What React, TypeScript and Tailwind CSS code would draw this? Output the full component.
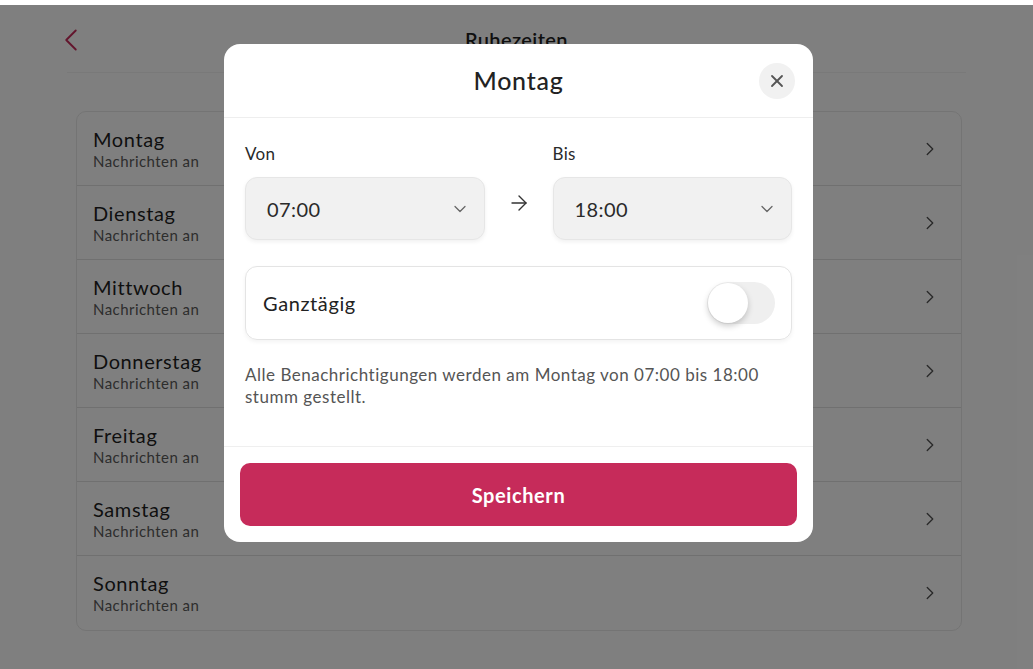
import React, { useState } from 'react';
import { ChevronLeft, ChevronRight, ChevronDown, ArrowRight, X } from 'lucide-react';

const days = ['Montag', 'Dienstag', 'Mittwoch', 'Donnerstag', 'Freitag', 'Samstag', 'Sonntag'];

function TimeSelect({ label, value }: { label: string; value: string }) {
	return (
		<div className="flex-1">
			<div className="text-[17px] tracking-[0.02em] text-[#2a2a2a] mb-[11px] leading-[24px]">{label}</div>
			<div className="h-[63px] rounded-[12px] bg-[#f1f1f1] border border-[#e6e6e6] shadow-[0_2px_4px_rgba(0,0,0,0.06)] flex items-center justify-between pl-[21px] pr-[14px]">
				<span className="text-[20px] tracking-[0.02em] text-[#2a2a2a]">{value}</span>
				<ChevronDown className="w-[20px] h-[20px] text-[#666]" strokeWidth={1.5} />
			</div>
		</div>
	);
}

export default function App() {
	const [allDay, setAllDay] = useState(false);

	return (
		<div className="relative h-[669px] w-full bg-white overflow-hidden font-['Lato',sans-serif]">
			{/* Page behind the dialog */}
			<div className="h-[73px] mx-[67px] border-b border-[#f3f3f3] flex items-center relative">
				<ChevronLeft className="w-[38px] h-[38px] -ml-[15px] mt-[7px] text-[#c62b5a]" strokeWidth={1.2} />
				<div className="absolute left-0 right-0 top-[24px] text-center text-[20px] font-semibold tracking-[0.02em] text-[#1f1f1f]">Ruhezeiten</div>
			</div>

			<div className="ml-[76px] mr-[71px] mt-[38px] border border-[#e8e8e8] rounded-[10px] overflow-hidden">
				{days.map((day, i) => (
					<div
						key={day}
						className={`h-[74px] flex items-center justify-between pl-[16px] pr-[20px] ${i < days.length - 1 ? 'border-b border-[#e0e0e0]' : ''}`}
					>
						<div>
							<div className="text-[20px] tracking-[0.03em] text-[#1f1f1f] leading-[25px]">{day}</div>
							<div className="text-[15px] tracking-[0.03em] text-[#5a5a5a] leading-[19px]">Nachrichten an</div>
						</div>
						<ChevronRight className="w-[22px] h-[22px] text-[#555]" strokeWidth={1.5} />
					</div>
				))}
			</div>

			{/* Overlay */}
			<div className="absolute left-0 right-0 bottom-0 top-[5px] bg-black/50 flex justify-center pt-[39px] pl-[4px]">
				<div className="w-[589px] h-[498px] bg-white rounded-[16px] flex flex-col overflow-hidden">
					<div className="h-[74px] border-b border-[#eeeeee] flex items-center justify-center relative shrink-0">
						<span className="text-[25px] font-medium tracking-[0.03em] text-[#222]">Montag</span>
						<button className="absolute right-[18px] top-[19px] w-[36px] h-[36px] rounded-full bg-[#f1f1f1] flex items-center justify-center">
							<X className="w-[20px] h-[20px] text-[#555]" strokeWidth={2.2} />
						</button>
					</div>

					<div className="px-[21px] pt-[24px] flex-1">
						<div className="flex items-end gap-[22px]">
							<TimeSelect label="Von" value="07:00" />
							<div className="h-[63px] flex items-start pt-[14px]">
								<ArrowRight className="w-[24px] h-[24px] text-[#333]" strokeWidth={1.4} />
							</div>
							<TimeSelect label="Bis" value="18:00" />
						</div>

						<div className="mt-[26px] h-[74px] rounded-[12px] border border-[#e4e4e4] shadow-[0_2px_4px_rgba(0,0,0,0.05)] flex items-center justify-between pl-[17px] pr-[16px]">
							<span className="text-[20px] tracking-[0.03em] text-[#222]">Ganztägig</span>
							<button
								onClick={() => setAllDay(!allDay)}
								className={`w-[68px] h-[42px] rounded-full p-[1px] flex items-center ${allDay ? 'bg-[#c62b5a] justify-end' : 'bg-[#efefef] justify-start'}`}
							>
								<span className="w-[40px] h-[40px] rounded-full bg-white shadow-[0_3px_6px_rgba(0,0,0,0.2)]" />
							</button>
						</div>

						<p className="mt-[24px] text-[17px] leading-[22px] tracking-[0.03em] text-[#555]">
							Alle Benachrichtigungen werden am Montag von 07:00 bis 18:00 stumm gestellt.
						</p>
					</div>

					<div className="border-t border-[#efefef] px-[16px] pt-[16px] pb-[16px] shrink-0">
						<button className="w-full h-[63px] rounded-[10px] bg-[#c62b5a] text-white text-[20px] font-bold tracking-[0.03em]">
							Speichern
						</button>
					</div>
				</div>
			</div>
		</div>
	);
}
